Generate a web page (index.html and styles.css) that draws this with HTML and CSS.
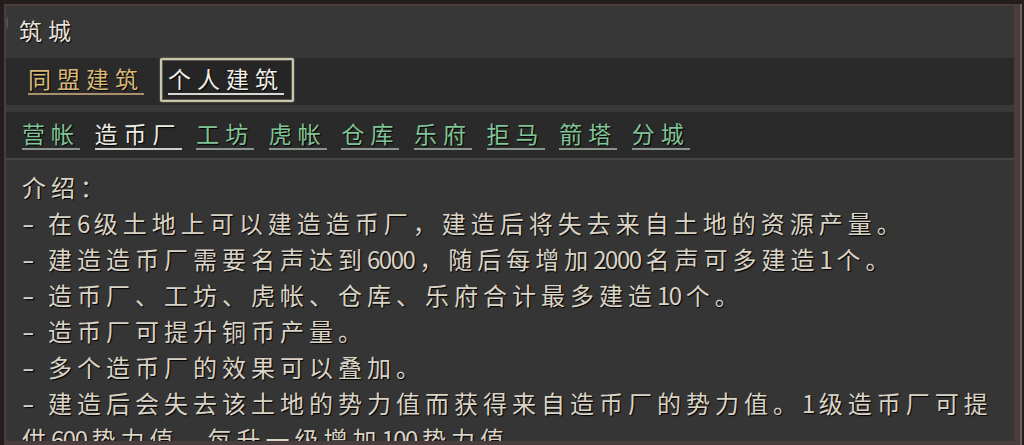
FILE: index.html
```html
<!DOCTYPE html>
<html lang="zh">
<head>
<meta charset="utf-8">
<title>筑城</title>
<link rel="stylesheet" href="styles.css">
</head>
<body>
<div class="panel">
  <span class="notch"></span>
  <div class="title">筑城</div>
  <div class="tabs1">
    <div class="tab gold"><span class="lbl">同盟建筑</span></div>
    <div class="tab selected"><span class="lbl">个人建筑</span></div>
  </div>
  <div class="sep"></div>
  <div class="tabs2">
    <span class="lbl green">营帐</span>
    <span class="lbl white">造币厂</span>
    <span class="lbl green">工坊</span>
    <span class="lbl green">虎帐</span>
    <span class="lbl green">仓库</span>
    <span class="lbl green">乐府</span>
    <span class="lbl green">拒马</span>
    <span class="lbl green">箭塔</span>
    <span class="lbl green">分城</span>
  </div>
  <div class="line"></div>
  <div class="content">
    <div class="row">介绍：</div>
    <div class="row"><span class="dash">-</span>在<span class="num">6</span>级土地上可以建造造币厂，建造后将失去来自土地的资源产量。</div>
    <div class="row"><span class="dash">-</span>建造造币厂需要名声达到<span class="num">6000</span>，随后每增加<span class="num">2000</span>名声可多建造<span class="num">1</span>个。</div>
    <div class="row"><span class="dash">-</span>造币厂、工坊、虎帐、仓库、乐府合计最多建造<span class="num">10</span>个。</div>
    <div class="row"><span class="dash">-</span>造币厂可提升铜币产量。</div>
    <div class="row"><span class="dash">-</span>多个造币厂的效果可以叠加。</div>
    <div class="row"><span class="dash">-</span>建造后会失去该土地的势力值而获得来自造币厂的势力值。<span class="num">1</span>级造币厂可提</div>
    <div class="row">供<span class="num">600</span>势力值，每升一级增加<span class="num">100</span>势力值。</div>
  </div>
</div>
</body>
</html>
```

FILE: styles.css
```css
html, body {
  margin: 0;
  padding: 0;
  background: #241d1d;
  width: 1024px;
  height: 445px;
  overflow: hidden;
  font-family: "Noto Sans CJK SC", "Noto Sans", sans-serif;
}

.panel {
  position: relative;
  margin: 4px 0 0 4px;
  width: 1008px;
  height: 435px;
  border-style: solid;
  border-color: #4b3d3d;
  border-width: 2px 6px 4px 2px;
  box-shadow: 2px 0 0 #6d6262;
  background: #363535;
  overflow: hidden;
}

.notch {
  position: absolute;
  left: -2px;
  top: 10px;
  width: 0;
  height: 0;
  border-top: 7px solid transparent;
  border-bottom: 7px solid transparent;
  border-right: 4px solid #5a4c4c;
}

.title {
  height: 48px;
  line-height: 48px;
  padding: 0 0 4px 13px;
  background: #383737;
  color: #e6e2da;
  font-size: 23px;
  letter-spacing: 6px;
  text-shadow: 1px 1px 1px #000;
}

.tabs1 {
  height: 47px;
  background: #2b2a2a;
  display: flex;
  align-items: flex-start;
  gap: 8px;
  padding-left: 14px;
}

.tab {
  height: 40px;
  padding: 0 6px;
  border: 2px solid transparent;
  box-sizing: content-box;
}

.tab.selected {
  padding: 0 8px 0 6px;
}

.tab .lbl {
  margin-top: 5px;
}

.lbl {
  display: inline-block;
  font-size: 23px;
  line-height: 26px;
  letter-spacing: 6px;
  padding-bottom: 2px;
  border-bottom: 2px solid #8a8a86;
  text-shadow: 1px 1px 1px #000;
}

.gold .lbl {
  color: #d9b979;
  border-bottom-color: #a8906a;
}

.selected {
  border-color: #c9c7ad;
  background: #262525;
  box-shadow: inset 0 0 0 1px #5a5a4c, 0 0 2px #8a8a70;
  border-radius: 2px;
}

.selected .lbl {
  color: #efefe8;
  border-bottom-color: #d8d8d2;
}

.sep {
  height: 7px;
  background: #3a3939;
}

.tabs2 {
  height: 46px;
  background: #2b2a2a;
  display: flex;
  align-items: flex-start;
  gap: 14.6px;
  padding-left: 16px;
}

.tabs2 .lbl {
  margin-top: 8px;
}

.green {
  color: #80c497;
  border-bottom-color: #8c9490;
}

.white {
  color: #ecece6;
  border-bottom-color: #cfcfca;
}

.line {
  height: 2px;
  background: #454343;
}

.content {
  padding: 9px 0 0 16px;
  color: #dad4c6;
  font-size: 24px;
  line-height: 36px;
  letter-spacing: 5px;
  text-shadow: 1px 1px 1px #000;
}

.row {
  white-space: nowrap;
}

.dash {
  display: inline-block;
  width: 26px;
  letter-spacing: 0;
  transform: scaleX(1.5);
  transform-origin: left center;
}

.num {
  letter-spacing: -1.5px;
  margin-right: 5px;
}
```
